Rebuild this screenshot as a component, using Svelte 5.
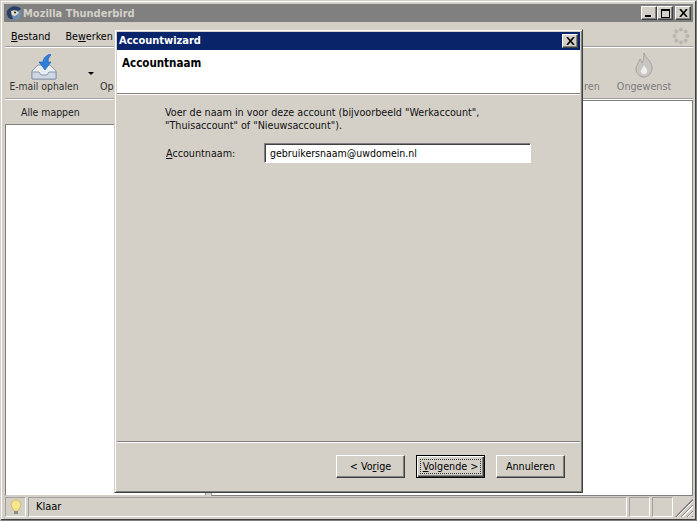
<script lang="ts">
	// Thunderbird main window with the account wizard dialog on top of it
	const menu = [
		{ pre: '', key: 'B', post: 'estand' },
		{ pre: 'Be', key: 'w', post: 'erken' }
	];
</script>

<div class="screen">
	<div class="window">
		<header class="titlebar">
			<svg class="tb-logo" viewBox="0 0 16 16" width="16" height="16" aria-hidden="true">
				<circle cx="8" cy="8" r="7" fill="#6f8db3" />
				<path d="M1 6C4 0 12 0 15 4L12 6C9 4 6 5 5 8L7 14C3 15 0 11 1 6Z" fill="#2c3f63" />
				<path d="M5 6C8 4.5 12 6 13 8L9 11L6 10Z" fill="#e4dcc4" />
				<circle cx="9" cy="7.5" r="1" fill="#222" />
			</svg>
			<span class="tb-text">Mozilla Thunderbird</span>
			<div class="caption-btns">
				<button class="cap"><span class="min"></span></button>
				<button class="cap"><span class="max"></span></button>
				<button class="cap close-gap">
					<svg viewBox="0 0 9 8" width="9" height="8" aria-hidden="true"><path d="M1 0L8 8M8 0L1 8" stroke="#000" stroke-width="1.6" /></svg>
				</button>
			</div>
		</header>

		<nav class="menubar">
			{#each menu as m}
				<span class="menu-item">{m.pre}<u>{m.key}</u>{m.post}</span>
			{/each}
			<svg class="throbber" viewBox="0 0 18 18" width="18" height="18" aria-hidden="true">
				<g fill="#b9b6b0">
					<circle cx="9" cy="2.5" r="2" /><circle cx="9" cy="15.5" r="2" />
					<circle cx="2.5" cy="9" r="2" /><circle cx="15.5" cy="9" r="2" />
					<circle cx="4.4" cy="4.4" r="2" /><circle cx="13.6" cy="4.4" r="2" />
					<circle cx="4.4" cy="13.6" r="2" /><circle cx="13.6" cy="13.6" r="2" />
				</g>
			</svg>
		</nav>

		<div class="toolbar">
			<div class="tool get-mail">
				<svg viewBox="0 0 26 26" width="26" height="26" aria-hidden="true">
					<path d="M1 17L7 11H19L25 17V25H1Z" fill="#e8edf2" stroke="#8a97a8" />
					<path d="M1 18H8L10 21H16L18 18H25V25H1Z" fill="#cfd8e2" stroke="#8a97a8" />
					<path d="M19 0C14 2 12 5 12 8H8L14 16L20 8H17C17 5 18 3 20 1Z" fill="#2f7fd6" stroke="#1c5aa8" stroke-width=".6" />
				</svg>
				<span>E-mail ophalen</span>
			</div>
			<span class="drop"></span>
			<span class="tool-label op">Op</span>
			<div class="tool junk">
				<svg viewBox="0 0 20 26" width="20" height="26" aria-hidden="true">
					<path d="M10 1C11 6 19 10 18 17C17 23 13 25 10 25C6 25 2 22 2 17C2 13 5 11 6 7C7 9 8 10 8 11C10 8 10 4 10 1Z" fill="#c9c6c2" stroke="#a5a29e" />
					<path d="M10 13C11 16 14 17 13 20C12 23 8 23 7 20C6 18 9 16 10 13Z" fill="#efeeec" />
				</svg>
				<span>Ongewenst</span>
			</div>
			<span class="tool-label ren">ren</span>
		</div>

		<div class="panes">
			<aside class="folders">
				<div class="folders-head">Alle mappen</div>
				<div class="folder-list"></div>
			</aside>
			<div class="messages"></div>
		</div>

		<footer class="statusbar">
			<div class="st-cell bulb">
				<svg viewBox="0 0 12 16" width="12" height="16" aria-hidden="true">
					<path d="M6 1C3 1 1 3 1 6C1 8 3 9 4 12H8C9 9 11 8 11 6C11 3 9 1 6 1Z" fill="#f6e58f" stroke="#c9b458" stroke-width=".8" />
					<rect x="4" y="12" width="4" height="3" fill="#8c8c84" />
				</svg>
			</div>
			<div class="st-cell st-main">Klaar</div>
			<div class="st-cell st-small"></div>
			<div class="st-cell st-small"></div>
			<div class="grip"></div>
		</footer>
	</div>

	<div class="dialog">
		<header class="dlg-title">
			<span>Accountwizard</span>
			<button class="cap">
				<svg viewBox="0 0 9 8" width="9" height="8" aria-hidden="true"><path d="M1 0L8 8M8 0L1 8" stroke="#000" stroke-width="1.6" /></svg>
			</button>
		</header>
		<div class="dlg-head">Accountnaam</div>
		<div class="dlg-body">
			<p>Voer de naam in voor deze account (bijvoorbeeld "Werkaccount",<br />"Thuisaccount" of "Nieuwsaccount").</p>
			<div class="field">
				<label for="acc"><u>A</u>ccountnaam:</label>
				<input id="acc" value="gebruikersnaam@uwdomein.nl" />
			</div>
		</div>
		<div class="dlg-foot">
			<button class="btn">&lt; Vo<u>r</u>ige</button>
			<button class="btn default"><span><u>V</u>olgende &gt;</span></button>
			<button class="btn">Annuleren</button>
		</div>
	</div>
</div>

<style>
	:global(body) {
		margin: 0;
		background: #d4d0c8;
	}

	.screen {
		position: relative;
		width: 697px;
		height: 521px;
		overflow: hidden;
		font-family: 'DejaVu Sans Condensed', 'DejaVu Sans', sans-serif;
		font-size: 10.7px;
		color: #000;
		background: #d4d0c8;
	}

	.window {
		box-sizing: border-box;
		width: 697px;
		height: 521px;
		padding: 3px 3px 3px 4px;
		display: flex;
		flex-direction: column;
		border: 1px solid #808080;
		border-top-color: #d4d0c8;
		border-left-color: #d4d0c8;
		box-shadow: inset -1px -1px 0 #404040, inset 1px 1px 0 #fff;
	}

	.titlebar {
		flex: none;
		height: 18px;
		margin-left: -1px;
		padding: 0 2px 0 2px;
		display: flex;
		align-items: center;
		gap: 1px;
		background: #808080;
	}
	.tb-text {
		font-weight: bold;
		font-size: 11px;
		color: #d4d0c8;
	}
	.caption-btns {
		margin-left: auto;
		display: flex;
	}
	.close-gap {
		margin-left: 2px;
	}

	.cap {
		box-sizing: border-box;
		width: 16px;
		height: 14px;
		padding: 0;
		display: flex;
		align-items: center;
		justify-content: center;
		position: relative;
		background: #d4d0c8;
		border: 1px solid;
		border-color: #fff #404040 #404040 #fff;
		box-shadow: inset -1px -1px 0 #808080;
	}
	.min {
		position: absolute;
		left: 3px;
		bottom: 2px;
		width: 6px;
		height: 2px;
		background: #000;
	}
	.max {
		box-sizing: border-box;
		width: 9px;
		height: 9px;
		border: 1px solid #000;
		border-top-width: 2px;
	}

	.menubar {
		flex: none;
		height: 24px;
		box-sizing: border-box;
		margin-top: 1px;
		padding: 3px 0 0 6px;
		display: flex;
		align-items: center;
		gap: 15px;
		position: relative;
		border-bottom: 1px solid #a0a0a0;
		box-shadow: 0 1px 0 #fff;
	}
	.throbber {
		position: absolute;
		right: 3px;
		top: 4px;
	}

	.toolbar {
		flex: none;
		height: 51px;
		box-sizing: border-box;
		position: relative;
		margin-top: 1px;
		border-bottom: 1px solid #a0a0a0;
		box-shadow: 0 1px 0 #fff;
	}
	.tool {
		position: absolute;
		top: 4px;
		display: flex;
		flex-direction: column;
		align-items: center;
		gap: 2px;
		color: #333;
		white-space: nowrap;
	}
	.get-mail {
		left: 4px;
		width: 70px;
		top: 6px;
		gap: 0;
		font-size: 10.3px;
	}
	.junk {
		left: 611px;
		width: 56px;
		color: #7c7c7c;
	}
	.drop {
		position: absolute;
		left: 83px;
		top: 24px;
		border: 3px solid transparent;
		border-top: 3px solid #000;
	}
	.tool-label {
		position: absolute;
		top: 32px;
	}
	.op {
		left: 95px;
		color: #333;
	}
	.ren {
		left: 579px;
		color: #7c7c7c;
	}

	.panes {
		flex: 1;
		display: flex;
		min-height: 0;
		margin-top: 1px;
	}
	.folders {
		width: 201px;
		display: flex;
		flex-direction: column;
	}
	.folders-head {
		height: 24px;
		box-sizing: border-box;
		padding: 6px 0 0 16px;
		color: #222;
		font-size: 10.4px;
	}
	.folder-list {
		flex: 1;
		background: #fff;
		border: 1px solid #808080;
		border-bottom-color: #d4d0c8;
		border-right-color: #a0a0a0;
	}
	.messages {
		flex: 1;
		margin-left: 5px;
		background: #fff;
		border: 1px solid #808080;
		border-left-color: #a0a0a0;
	}

	.statusbar {
		flex: none;
		height: 20px;
		margin-top: 1px;
		display: flex;
		gap: 2px;
		position: relative;
	}
	.st-cell {
		box-sizing: border-box;
		height: 20px;
		border: 1px solid;
		border-color: #a0a0a0 #fff #fff #a0a0a0;
	}
	.bulb {
		width: 21px;
		display: flex;
		align-items: center;
		justify-content: center;
	}
	.st-main {
		flex: 1;
		padding: 2px 0 0 7px;
		font-size: 11px;
	}
	.st-small {
		width: 21px;
	}
	.grip {
		width: 18px;
		background: repeating-linear-gradient(135deg, transparent 0 2px, #808080 2px 3px, #fff 3px 4px);
		clip-path: polygon(100% 0, 100% 100%, 0 100%);
	}

	.dialog {
		position: absolute;
		left: 114px;
		top: 29px;
		box-sizing: border-box;
		width: 469px;
		height: 464px;
		padding: 2px;
		display: flex;
		flex-direction: column;
		background: #d4d0c8;
		border: 1px solid;
		border-color: #d4d0c8 #404040 #404040 #d4d0c8;
		box-shadow: inset 1px 1px 0 #fff, inset -1px -1px 0 #808080;
	}
	.dlg-title {
		flex: none;
		box-sizing: border-box;
		height: 18px;
		padding: 0 2px 1px 2px;
		display: flex;
		align-items: center;
		justify-content: space-between;
		background: #0a246a;
		color: #fff;
		font-weight: bold;
		font-size: 11px;
	}
	.dlg-head {
		flex: none;
		height: 44px;
		box-sizing: border-box;
		padding: 6px 0 0 5px;
		background: #fff;
		font-weight: bold;
		font-size: 11.5px;
		border-bottom: 1px solid #808080;
	}
	.dlg-body {
		flex: 1;
		padding: 11px 0 0 48px;
		border-top: 1px solid #fff;
		border-bottom: 1px solid #808080;
		line-height: 13px;
		color: #111;
	}
	.dlg-body p {
		margin: 0;
	}
	.field {
		margin-top: 11px;
		display: flex;
		align-items: center;
	}
	.field label {
		width: 98px;
		margin-left: 1px;
	}
	.field input {
		box-sizing: border-box;
		width: 267px;
		height: 20px;
		padding: 0 5px;
		font: inherit;
		font-size: 10.5px;
		color: #000;
		background: #fff;
		outline: none;
		border: 1px solid;
		border-color: #808080 #fff #fff #808080;
		box-shadow: inset 1px 1px 0 #404040;
	}

	.dlg-foot {
		flex: none;
		height: 48px;
		box-sizing: border-box;
		padding: 12px 15px 0 0;
		display: flex;
		justify-content: flex-end;
		gap: 11px;
		border-top: 1px solid #fff;
	}
	.btn {
		box-sizing: border-box;
		width: 69px;
		height: 23px;
		padding: 0;
		font: inherit;
		color: #000;
		background: #d4d0c8;
		border: 1px solid;
		border-color: #fff #404040 #404040 #fff;
		box-shadow: inset -1px -1px 0 #808080;
	}
	.default {
		border: 1px solid #000;
		box-shadow: inset 1px 1px 0 #fff, inset -1px -1px 0 #404040, inset -2px -2px 0 #808080;
		padding: 3px;
	}
	.default span {
		display: block;
		line-height: 13px;
		border: 1px dotted #333;
	}
</style>
